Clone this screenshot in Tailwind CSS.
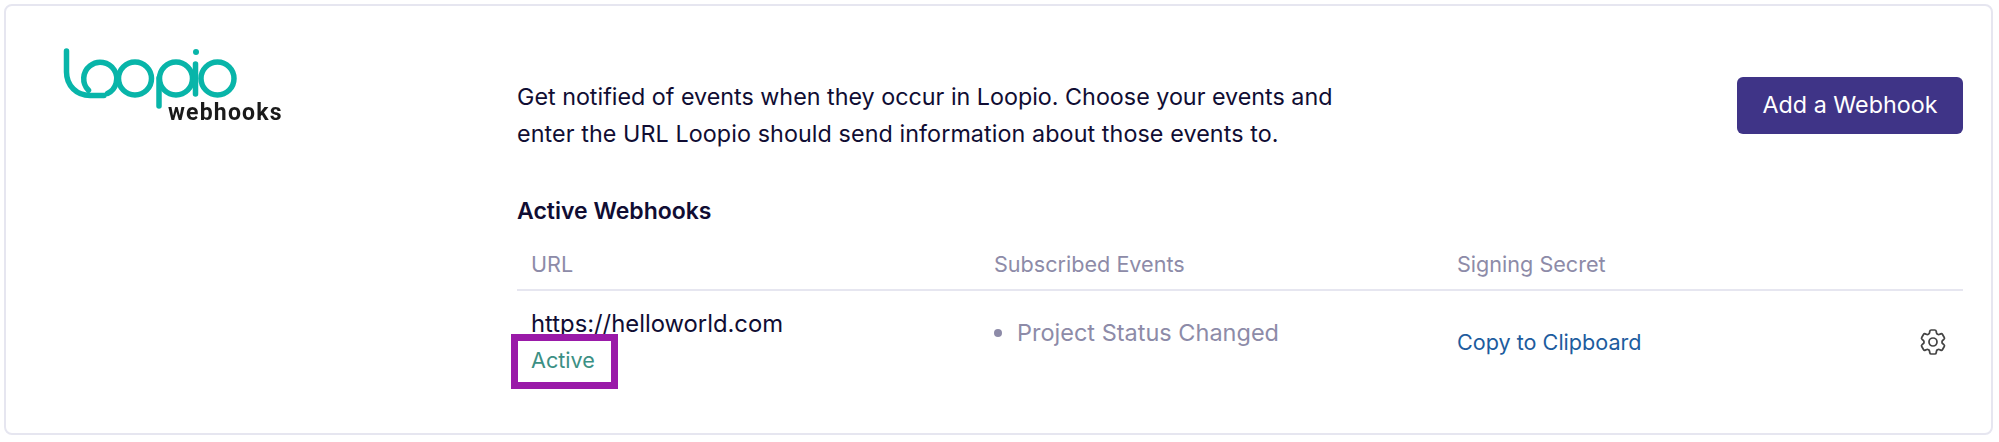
<!DOCTYPE html>
<html lang="en">
<head>
  <meta charset="UTF-8">
  <title>Loopio webhooks</title>
  <script src="https://cdn.jsdelivr.net/npm/@tailwindcss/browser@4"></script>
</head>
<body class="bg-white font-['Inter',sans-serif] text-[#100d33] overflow-hidden">
  <div class="w-[1999px] h-[442px] pt-[4px] pl-[4px]">
    <!-- Card -->
    <div class="relative w-[1989px] h-[431px] border-2 border-[#e6e6f0] rounded-[8px] flex">
      <div class="w-[511px] pl-[54px] pt-[38px] shrink-0">
        <svg class="block blur-[0.5px]" width="180" height="66" viewBox="0 0 180 66" fill="none" stroke="#08b5a9" stroke-width="5.500" stroke-linecap="round">
          <path d="M6.5 7V28C6.5 42 17 51.5 30 51.5H44"/>
          <path d="M47.5 49.5A16.5 16.5 0 1 0 28.5 46.3"/>
          <circle cx="75" cy="34.5" r="16.5"/>
          <circle cx="116" cy="34.5" r="16.5"/>
          <path d="M99 34V62"/>
          <path d="M135.500 20V50"/>
          <circle cx="157.500" cy="34.500" r="16.500"/>
          <circle cx="136" cy="8" r="3" fill="#08b5a9" stroke="none"/>
        </svg>
        <div class="ml-[108px] -mt-[9px] text-[23px] leading-[24px] font-bold tracking-[1.2px] text-[#1a1a1a] font-['Roboto',sans-serif] blur-[0.6px]">webhooks</div>
      </div>
      <div class="flex-1 pr-[28px] pt-[73px]">
        <div class="flex justify-between items-start">
          <p class="text-[23.3px] leading-[37px] mt-[-1px]">Get notified of events when they occur in Loopio. Choose your events and<br><span class="tracking-[0.09px]">enter the URL Loopio should send information about those events to.</span></p>
          <button class="w-[226px] h-[57px] mt-[-2px] bg-[#3f3487] rounded-[6px] text-white text-[23.3px]">Add a Webhook</button>
        </div>
        <h3 class="mt-[44px] text-[23px] leading-[30px] font-semibold">Active Webhooks</h3>
        <div class="mt-[23px] h-[42px] pl-[14px] flex items-start border-b-2 border-[#e6e6f0] text-[21.6px] leading-[30px] text-[#8d8ba8]">
          <div class="w-[463px]">URL</div>
          <div class="w-[463px]">Subscribed Events</div>
          <div>Signing Secret</div>
        </div>
        <div class="flex pl-[14px] pt-[16px]">
          <div class="w-[463px]">
            <div class="text-[23.8px] leading-[34px]">https://helloworld.com</div>
            <div class="text-[21.6px] leading-[30px] mt-[4px] text-[#3b9084]">Active</div>
          </div>
          <div class="w-[463px] flex items-center h-[34px] mt-[9px] text-[23.5px] text-[#8d8ba8]">
            <span class="w-[8px] h-[8px] rounded-full bg-[#8d8ba8] mr-[15px]"></span>Project Status Changed
          </div>
          <div class="flex-1 flex justify-between items-center h-[50px] mt-[10px] text-[21.6px] text-[#1d5c9e]">
            <span>Copy to Clipboard</span>
            <svg class="mr-[14px]" width="32" height="32" viewBox="0 0 24 24" fill="none" stroke="#444" stroke-width="1.3" stroke-linejoin="round">
              <path d="M9.594 3.94c.09-.542.56-.94 1.11-.94h2.593c.55 0 1.02.398 1.11.94l.213 1.281c.063.374.313.686.645.87.074.04.147.083.22.127.325.196.72.257 1.075.124l1.217-.456a1.125 1.125 0 0 1 1.37.49l1.296 2.247a1.125 1.125 0 0 1-.26 1.431l-1.003.827c-.293.241-.438.613-.43.992a7.723 7.723 0 0 1 0 .255c-.008.378.137.75.43.991l1.004.827c.424.35.534.955.26 1.43l-1.298 2.247a1.125 1.125 0 0 1-1.369.491l-1.217-.456c-.355-.133-.75-.072-1.076.124a6.47 6.47 0 0 1-.22.128c-.331.183-.581.495-.644.869l-.213 1.281c-.09.543-.56.94-1.11.94h-2.594c-.55 0-1.019-.398-1.11-.94l-.213-1.281c-.062-.374-.312-.686-.644-.87a6.52 6.52 0 0 1-.22-.127c-.325-.196-.72-.257-1.076-.124l-1.217.456a1.125 1.125 0 0 1-1.369-.49l-1.297-2.247a1.125 1.125 0 0 1 .26-1.431l1.004-.827c.292-.24.437-.613.43-.991a6.932 6.932 0 0 1 0-.255c.007-.38-.138-.751-.43-.992l-1.004-.827a1.125 1.125 0 0 1-.26-1.43l1.297-2.247a1.125 1.125 0 0 1 1.37-.491l1.216.456c.356.133.751.072 1.076-.124.072-.044.146-.086.22-.128.332-.183.582-.495.644-.869l.214-1.28Z"/>
              <circle cx="12" cy="12" r="3"/>
            </svg>
          </div>
        </div>
      </div>
      <!-- Purple annotation box around the status -->
      <div class="absolute left-[505px] top-[328px] w-[107px] h-[55px] border-[7px] border-[#9a1aa8]"></div>
    </div>
  </div>
</body>
</html>
